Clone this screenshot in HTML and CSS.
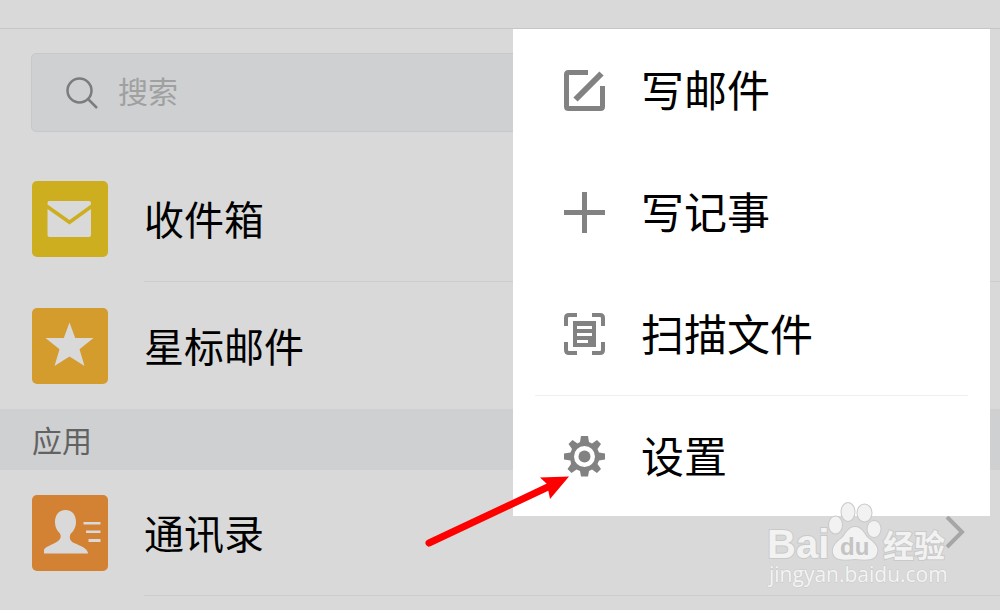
FILE: index.html
```html
<!DOCTYPE html>
<html lang="zh-CN">
<head>
<meta charset="utf-8">
<meta name="viewport" content="width=device-width, initial-scale=1">
<title>邮箱</title>
<link rel="stylesheet" href="styles.css">
</head>
<body>
<div class="app">
  <header class="topbar"></header>
  <main>
    <label class="search">
      <svg class="search-icon" viewBox="0 0 32 32" aria-hidden="true"><circle cx="13.500" cy="13.500" r="12"/><path d="M22 22l9 9"/></svg>
      <input class="search-input" type="search" placeholder="搜索" aria-label="搜索">
    </label>
    <nav>
      <a class="row" href="#inbox">
        <svg class="tile tile-inbox" viewBox="0 0 76 76" aria-hidden="true">
          <path d="M17 20h40q2 0 2 2v1.500L37.500 39 15.500 23.500V22q0-2 1.500-2zM15.500 28L37.500 43.500 59 28v26q0 2-2 2H17.500q-2 0-2-2z"/>
        </svg>
        <span class="row-body row-line">收件箱</span>
      </a>
      <a class="row row-last" href="#starred">
        <svg class="tile tile-star" viewBox="0 0 76 76" aria-hidden="true">
          <path d="M37.500 14.500L43.200 30H61.500L47.500 41.200 52.500 58 37.500 48.500 22.500 58 27.500 41.200 13.500 30H31.800z"/>
        </svg>
        <span class="row-body">星标邮件</span>
      </a>
      <h2 class="section">应用</h2>
      <a class="row" href="#contacts">
        <svg class="tile tile-contacts" viewBox="0 0 76 76" aria-hidden="true">
          <path d="M33.500 15c7 0 10.500 5.500 10.500 12 0 6-3 9.500-5.500 12-1.500 4-.5 7 3.500 9 7 3 13 5 14 10v.5H12V55c.5-3 7-4.500 12.500-8 4-2 5-5 3.500-8.500-2.500-2.500-5-5.500-5-11.500 0-6.500 3.500-12 10.500-12z"/>
          <path d="M51.500 27h17v2.500h-17zM54 35.500h14.500V38H54zM56.500 44h12v3h-12z"/>
        </svg>
        <span class="row-body row-line">通讯录
          <svg class="chevron" viewBox="0 0 20 34" aria-hidden="true"><path d="M2 2l15 15L2 32"/></svg>
        </span>
      </a>
    </nav>
  </main>

  <div class="menu">
    <button class="menu-item" type="button">
      <svg class="menu-icon" viewBox="0 0 42 42" aria-hidden="true"><path class="stroke" d="M25 3.500H5.500Q3.500 3.500 3.500 5.500v32q0 2 2 2h32q2 0 2-2V17"/><path class="stroke thick" d="M12.500 30.500L38.500 4.500"/></svg>
      <span class="menu-label">写邮件</span>
    </button>
    <button class="menu-item" type="button">
      <svg class="menu-icon" viewBox="0 0 42 42" aria-hidden="true"><path class="stroke" d="M21.500 1v41M1 21.500h41"/></svg>
      <span class="menu-label">写记事</span>
    </button>
    <button class="menu-item" type="button">
      <svg class="menu-icon" viewBox="0 0 42 42" aria-hidden="true"><path class="stroke thin" d="M3 13V5q0-3 3-3h8M29 2h8q3 0 3 3v8M40 29v8q0 3-3 3h-8M14 40H6q-3 0-3-3v-8"/><path fill-rule="evenodd" d="M10 8h23v26H10zM14 13v3h15v-3zM14 20v3h15v-3zM14 27v3h11v-3z"/></svg>
      <span class="menu-label">扫描文件</span>
    </button>
    <div class="menu-line"></div>
    <div class="settings">
      <button class="menu-item" type="button">
        <svg class="menu-icon" viewBox="0 0 42 42" aria-hidden="true">
          <path fill-rule="evenodd" d="M18 1h7l1 6 3 1.500 5-3.500 4 4-3.500 5 1.500 3.500 6 1v6l-6 1-1.500 3.500 3.500 5-4 4-5-3.500-3 1.500-1 5.500h-7l-1-5.500-3.500-1.500-5 3.500-4-4 3.500-5L7.500 25.500 1 24.500v-6l6.500-1L9 14 5.500 9l4-4 5 3.500L17 7zM21.500 11a10.500 10.500 0 1 0 0 21 10.500 10.500 0 0 0 0-21z"/>
          <circle cx="21.500" cy="21.500" r="6"/>
        </svg>
        <span class="menu-label">设置</span>
      </button>
      <svg class="arrow" viewBox="0 0 155 80" aria-hidden="true"><path class="arrow-shaft" d="M9 73L130 16"/><path class="arrow-head" d="M149 6.500L120 7.500 127 14 130 29z"/></svg>
    </div>
  </div>

  <svg class="watermark" viewBox="0 0 200 90" role="img" aria-label="Baidu 经验">
    <g class="mark">
      <ellipse cx="71.500" cy="35" rx="6.500" ry="8.500"/>
      <ellipse cx="84" cy="22" rx="6.500" ry="9"/>
      <ellipse cx="100.500" cy="23" rx="7" ry="8.500"/>
      <ellipse cx="110" cy="39" rx="6.500" ry="8"/>
      <path d="M91 37c7 0 9 7 13 11 7 5 11 10 9 15-2 8-11 7-22 6-11 1-20 2-22-6-1-6 3-11 9-15 4-4 6-11 13-11z"/>
      <text class="wm-bai" x="3" y="68">Bai</text>
      <text class="wm-cn" x="119" y="67">经验</text>
    </g>
    <text class="wm-du" x="76" y="65">du</text>
    <text class="wm-url" x="5" y="92">jingyan.baidu.com</text>
  </svg>
</div>
</body>
</html>
```
FILE: styles.css
```css
* { box-sizing: border-box; }

body {
  margin: 0;
  background: #d9d9d9;
  color: #000;
  font-family: "Noto Sans CJK SC", sans-serif;
}

.app {
  position: relative;
  min-height: 100vh;
  overflow: hidden;
}

.topbar {
  height: 29px;
  border-bottom: 1px solid #c6c6c6;
}

.search {
  display: flex;
  align-items: center;
  gap: 20px;
  height: 79px;
  margin: 24px 31px;
  padding: 0 34px;
  background: #ced0d2;
  border: 1px solid #c6c8ca;
  border-radius: 5px;
}

.search-icon {
  width: 32px;
  height: 32px;
  fill: none;
  stroke: #7c7c7c;
  stroke-width: 2.5;
}

.search-input {
  flex: 1;
  min-width: 0;
  padding: 0 0 6px;
  border: 0;
  outline: 0;
  background: none;
  font: 30px/44px "Noto Sans CJK SC", sans-serif;
}

.search-input::placeholder { color: #a0a0a0; opacity: 1; }

.row {
  display: flex;
  align-items: center;
  gap: 36px;
  height: 126px;
  padding-left: 32px;
  color: #000;
  text-decoration: none;
}

.row-last { height: 127px; }

.tile {
  width: 76px;
  height: 76px;
  border-radius: 5px;
  fill: #d9d9d9;
}

.tile-inbox { background: #ccae1e; }
.tile-star { background: #d49b2d; }
.tile-contacts { background: #d38133; }

.row-body {
  display: flex;
  flex: 1;
  align-items: center;
  justify-content: space-between;
  height: 100%;
  padding: 0 35px 2px 0;
  font-size: 40px;
}

.row-line { border-bottom: 1px solid #cdcdcd; }

.chevron {
  width: 20px;
  height: 34px;
  fill: none;
  stroke: #a6a6a9;
  stroke-width: 4;
}

.section {
  margin: 0;
  padding: 8px 32px 9px;
  background: #ced0d2;
  color: #626262;
  font-size: 30px;
  font-weight: 400;
  line-height: 44px;
}

.menu {
  position: absolute;
  top: 29px;
  right: 10px;
  width: 477px;
  background: #fff;
}

.menu-item {
  display: flex;
  align-items: center;
  gap: 36px;
  width: 100%;
  height: 122px;
  padding: 0 50px;
  border: 0;
  background: none;
  color: #000;
  font: 43px/64px "Noto Sans CJK SC", sans-serif;
  text-align: left;
}

.menu-label { padding-bottom: 4px; }

.menu-icon {
  flex: none;
  width: 42px;
  height: 42px;
  fill: #828282;
}

.stroke { fill: none; stroke: #828282; stroke-width: 5; }
.thick { stroke-width: 6; }
.thin { stroke-width: 4; }

.menu-line {
  height: 1px;
  margin: 0 22px;
  background: #f0f0f0;
}

.settings { position: relative; }
.settings .menu-item { height: 120px; }

.arrow {
  position: absolute;
  top: 74px;
  left: -93px;
  width: 155px;
  height: 80px;
}

.arrow-shaft { fill: none; stroke: #f00; stroke-width: 7; stroke-linecap: round; }
.arrow-head { fill: #f00; }

.watermark {
  position: absolute;
  top: 490px;
  right: 36px;
  width: 200px;
  height: 90px;
  overflow: visible;
}

.mark {
  fill: #f2f2f2;
  stroke: #c9c9c9;
  stroke-width: 2;
  paint-order: stroke;
}

.wm-bai { font: 700 40px "Liberation Sans", sans-serif; }
.wm-du { font: 700 24px "Liberation Sans", sans-serif; fill: #c4c4c4; }
.wm-cn { font: 700 31px "Noto Sans CJK SC", sans-serif; }

.wm-url {
  font: 21px "Open Sans", sans-serif;
  fill: #f4f4f4;
  stroke: #c9c9c9;
  stroke-width: 1;
  paint-order: stroke;
}
```
